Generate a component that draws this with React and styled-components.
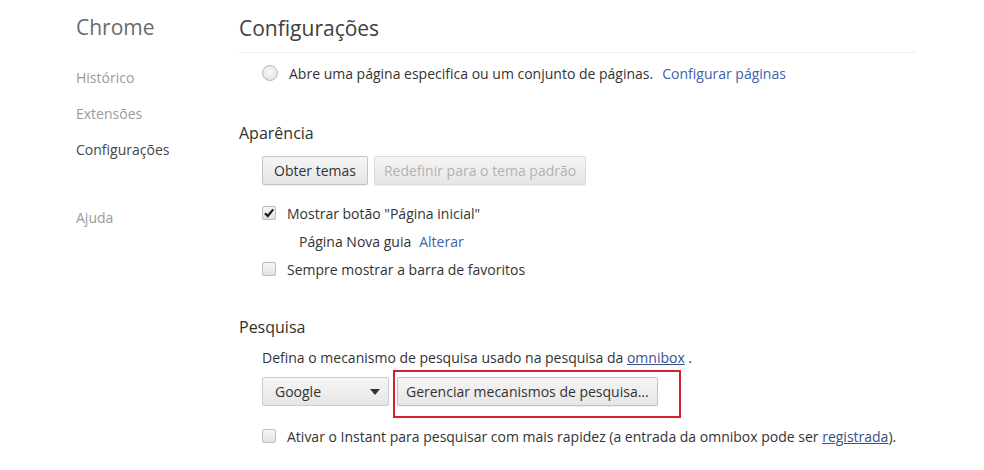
import React from "react";
import styled, { createGlobalStyle } from "styled-components";

const GlobalStyle = createGlobalStyle`
  body {
    margin: 0;
    background: #fff;
    font-family: "Open Sans", "Noto Sans", sans-serif;
    color: #303030;
  }
`;

const Page = styled.div`
  display: flex;
  width: 984px;
  height: 470px;
  overflow: hidden;
`;

const Sidebar = styled.nav`
  width: 163px;
  padding: 12px 0 0 76px;
  display: flex;
  flex-direction: column;
`;

const Brand = styled.h1`
  margin: 0 0 26px;
  font-size: 21px;
  font-weight: 400;
  color: #6b6b6b;
  line-height: 30px;
`;

const NavItem = styled.div`
  font-size: 14px;
  line-height: 20px;
  color: ${(p) => (p.$active ? "#464646" : "#9a9a9a")};
  margin-bottom: ${(p) => p.$gap || 16}px;
`;

const Main = styled.main`
  flex: 1;
  padding-top: 13px;
  padding-right: 68px;
`;

const Title = styled.h2`
  margin: 0;
  font-size: 21px;
  font-weight: 400;
  line-height: 30px;
  color: #404040;
  padding-bottom: 9px;
  border-bottom: 1px solid #eeeeee;
`;

const Section = styled.section`
  margin-top: ${(p) => p.$top || 0}px;
`;

const SectionTitle = styled.h3`
  margin: 0 0 ${(p) => p.$mb || 10}px;
  font-size: 16px;
  font-weight: 400;
  line-height: 22px;
  color: #303030;
`;

const Indent = styled.div`
  padding-left: 23px;
  font-size: 14px;
`;

const Row = styled.div`
  display: flex;
  align-items: center;
  height: ${(p) => p.$h || 28}px;
  margin-top: ${(p) => p.$mt || 0}px;
  padding-left: ${(p) => p.$pad || 0}px;
  color: #333;
  white-space: nowrap;
`;

const Radio = styled.span`
  width: 16px;
  height: 16px;
  border-radius: 50%;
  border: 1px solid #b9b9b9;
  background: radial-gradient(circle at 50% 40%, #fafafa, #dcdcdc);
  margin-right: 11px;
  box-sizing: border-box;
  flex-shrink: 0;
`;

const Box = styled.span`
  width: 14px;
  height: 14px;
  border: 1px solid #bdbdbd;
  border-radius: 2px;
  background: linear-gradient(#f6f6f6, #e2e2e2);
  margin-right: 11px;
  box-sizing: border-box;
  display: flex;
  align-items: center;
  justify-content: center;
  flex-shrink: 0;
`;

const Link = styled.a`
  color: ${(p) => (p.$under ? "#35518d" : "#3d63a8")};
  text-decoration: ${(p) => (p.$under ? "underline" : "none")};
  margin-left: ${(p) => p.$ml || 0}px;
`;

const Buttons = styled.div`
  display: flex;
  gap: 6px;
  margin: 0 0 14px;
`;

const Button = styled.button`
  font-family: inherit;
  font-size: 14px;
  height: 29px;
  padding: 0 ${(p) => p.$px || 11}px;
  border: 1px solid ${(p) => (p.$disabled ? "#dadada" : "#c4c4c4")};
  border-radius: 2px;
  background: linear-gradient(#f5f5f5, #e6e6e6);
  color: ${(p) => (p.$disabled ? "#b3b3b3" : "#333")};
  box-shadow: 0 1px 0 rgba(0, 0, 0, 0.06);
  white-space: nowrap;
`;

const Select = styled.div`
  width: 127px;
  height: 29px;
  box-sizing: border-box;
  border: 1px solid #cbcbcb;
  border-radius: 2px;
  background: linear-gradient(#f5f5f5, #e6e6e6);
  display: flex;
  align-items: center;
  justify-content: space-between;
  padding: 0 8px 0 12px;
  font-size: 14px;
  color: #333;
`;

const Caret = styled.span`
  width: 0;
  height: 0;
  border-left: 5px solid transparent;
  border-right: 5px solid transparent;
  border-top: 6px solid #333;
`;

const SearchRow = styled.div`
  display: flex;
  align-items: center;
  gap: 8px;
  margin-top: 10px;
`;

const Highlight = styled.div`
  position: relative;
  &::after {
    content: "";
    position: absolute;
    left: -4px;
    top: -7px;
    width: 288px;
    height: 48px;
    box-sizing: border-box;
    border: 2px solid #d4202b;
  }
`;

const Check = () => (
  <svg width="12" height="12" viewBox="0 0 12 12">
    <path d="M2 6.2 L4.8 9 L10.2 2.4" fill="none" stroke="#1f1f1f" strokeWidth="2.2" />
  </svg>
);

export default function App() {
  return (
    <Page>
      <GlobalStyle />
      <Sidebar>
        <Brand>Chrome</Brand>
        <NavItem>Histórico</NavItem>
        <NavItem>Extensões</NavItem>
        <NavItem $active $gap={48}>Configurações</NavItem>
        <NavItem>Ajuda</NavItem>
      </Sidebar>
      <Main>
        <Title>Configurações</Title>
        <Indent>
          <Row $h={40}>
            <Radio />
            Abre uma página especifica ou um conjunto de páginas.
            <Link $ml={9}>Configurar páginas</Link>
          </Row>
        </Indent>
        <Section $top={29}>
          <SectionTitle $mb={12}>Aparência</SectionTitle>
          <Indent>
            <Buttons>
              <Button>Obter temas</Button>
              <Button $disabled $px={9}>Redefinir para o tema padrão</Button>
            </Buttons>
            <Row>
              <Box><Check /></Box>
              Mostrar botão "Página inicial"
            </Row>
            <Row $pad={37}>
              Página Nova guia
              <Link $ml={8}>Alterar</Link>
            </Row>
            <Row>
              <Box />
              Sempre mostrar a barra de favoritos
            </Row>
          </Indent>
        </Section>
        <Section $top={33}>
          <SectionTitle $mb={9}>Pesquisa</SectionTitle>
          <Indent>
            <Row $h={20}>
              Defina o mecanismo de pesquisa usado na pesquisa da&nbsp;
              <Link $under>omnibox</Link>&nbsp;.
            </Row>
            <SearchRow>
              <Select>
                Google
                <Caret />
              </Select>
              <Highlight>
                <Button $px={8}>Gerenciar mecanismos de pesquisa...</Button>
              </Highlight>
            </SearchRow>
            <Row $h={34} $mt={13}>
              <Box />
              Ativar o Instant para pesquisar com mais rapidez (a entrada da omnibox pode ser&nbsp;
              <Link $under>registrada</Link>).
            </Row>
          </Indent>
        </Section>
      </Main>
    </Page>
  );
}
